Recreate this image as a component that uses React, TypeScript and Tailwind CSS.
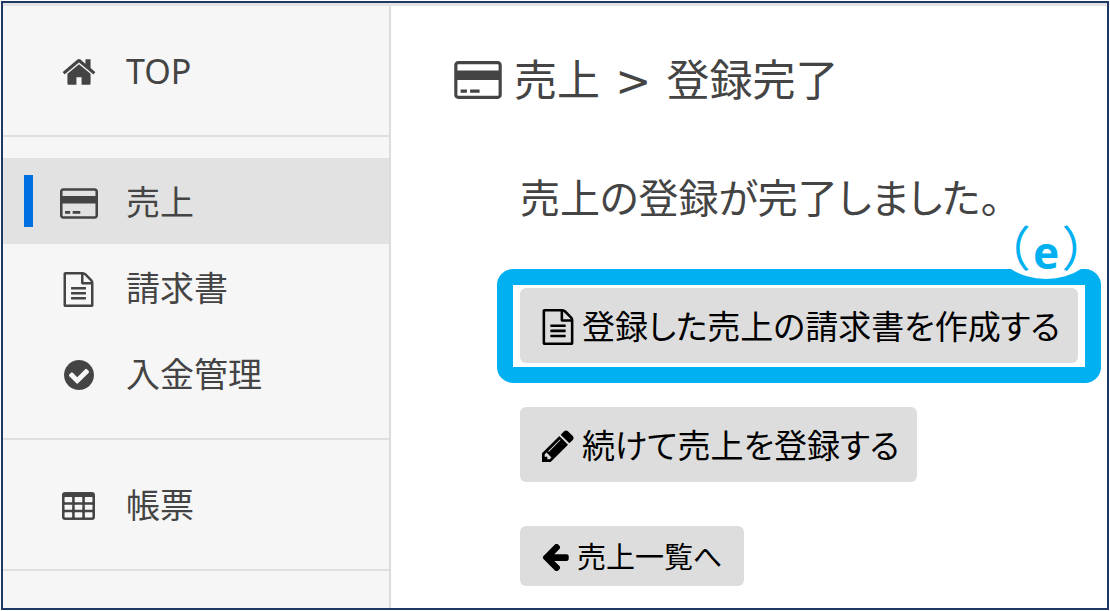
import type { ReactNode } from "react";
import clsx from "clsx";

type IconProps = { className?: string };

function Glyph({ d, viewBox = "0 0 1792 1792", className }: IconProps & { d: string; viewBox?: string }) {
  return (
    <svg viewBox={viewBox} className={clsx("shrink-0", className)} fill="currentColor" aria-hidden="true">
      <path d={d} />
    </svg>
  );
}

function HomeIcon({ className }: IconProps) {
  return (
    <Glyph
      className={className}
      d="M1472 992v480q0 26-19 45t-45 19h-384v-384h-256v384h-384q-26 0-45-19t-19-45v-480q0-1 .5-3t.5-3l575-474 575 474q1 2 1 6zm223-69l-62 74q-8 9-21 11h-3q-13 0-21-7l-692-577-692 577q-12 8-24 7-13-2-21-11l-62-74q-8-10-7-23.5t11-21.5l719-599q32-26 76-26t76 26l244 204v-195q0-14 9-23t23-9h192q14 0 23 9t9 23v408l219 182q10 8 11 21.5t-7 23.5z"
    />
  );
}

function CardIcon({ className }: IconProps) {
  return (
    <Glyph
      className={className}
      viewBox="0 128 1920 1536"
      d="M1760 128q66 0 113 47t47 113v1216q0 66-47 113t-113 47h-1600q-66 0-113-47t-47-113v-1216q0-66 47-113t113-47h1600zm-1600 128q-13 0-22.5 9.5t-9.5 22.5v224h1664v-224q0-13-9.5-22.5t-22.5-9.5h-1600zm1600 1280q13 0 22.5-9.5t9.5-22.5v-608h-1664v608q0 13 9.5 22.5t22.5 9.5h1600zm-1504-128v-128h256v128h-256zm384 0v-128h384v128h-384z"
    />
  );
}

function FileIcon({ className }: IconProps) {
  return (
    <Glyph
      className={className}
      viewBox="128 0 1536 1792"
      d="M1596 380q28 28 48 76t20 88v1152q0 40-28 68t-68 28h-1344q-40 0-68-28t-28-68v-1600q0-40 28-68t68-28h896q40 0 88 20t76 48zm-444-244v376h376q-10-29-22-41l-313-313q-12-12-41-22zm384 1528v-1024h-416q-40 0-68-28t-28-68v-416h-768v1536h1280zm-1024-864q0-14 9-23t23-9h704q14 0 23 9t9 23v64q0 14-9 23t-23 9h-704q-14 0-23-9t-9-23v-64zm736 224q14 0 23 9t9 23v64q0 14-9 23t-23 9h-704q-14 0-23-9t-9-23v-64q0-14 9-23t23-9h704zm0 256q14 0 23 9t9 23v64q0 14-9 23t-23 9h-704q-14 0-23-9t-9-23v-64q0-14 9-23t23-9h704z"
    />
  );
}

function CheckIcon({ className }: IconProps) {
  return (
    <Glyph
      className={className}
      viewBox="128 128 1536 1536"
      d="M1412 734q0-28-18-46l-91-90q-19-19-45-19t-45 19l-408 407-226-226q-19-19-45-19t-45 19l-91 90q-18 18-18 46 0 27 18 45l362 362q19 19 45 19 27 0 46-19l543-543q18-18 18-45zm252 162q0 209-103 385.5t-279.5 279.5-385.5 103-385.5-103-279.5-279.5-103-385.5 103-385.5 279.5-279.5 385.5-103 385.5 103 279.5 279.5 103 385.5z"
    />
  );
}

function TableIcon({ className }: IconProps) {
  const cells = [384, 768, 1152].flatMap((y) => [192, 704, 1216].map((x) => ({ x, y })));
  return (
    <svg viewBox="64 128 1664 1408" className={clsx("shrink-0", className)} aria-hidden="true">
      <mask id="table-cells">
        <rect x="64" y="128" width="1664" height="1408" rx="160" fill="white" />
        {cells.map(({ x, y }) => (
          <rect key={`${x}-${y}`} x={x} y={y} width="384" height="256" rx="32" fill="black" />
        ))}
      </mask>
      <rect x="64" y="128" width="1664" height="1408" fill="currentColor" mask="url(#table-cells)" />
    </svg>
  );
}

function PencilIcon({ className }: IconProps) {
  return (
    <Glyph
      className={className}
      viewBox="128 128 1536 1536"
      d="M491 1536l91-91-235-235-91 91v107h128v128h107zm523-928q0-22-22-22-10 0-17 7l-542 542q-7 7-7 17 0 22 22 22 10 0 17-7l542-542q7-7 7-17zm-54-192l416 416-832 832h-416v-416zm683 96q0 53-37 90l-166 166-416-416 166-165q36-38 90-38 53 0 91 38l235 234q37 39 37 91z"
    />
  );
}

function ArrowLeftIcon({ className }: IconProps) {
  return (
    <Glyph
      className={className}
      viewBox="160 192 1504 1536"
      d="M1664 896v128q0 53-32.5 90.5t-84.5 37.5h-704l293 294q38 36 38 90t-38 90l-75 76q-37 37-90 37-52 0-91-37l-651-652q-37-37-37-90 0-52 37-91l651-650q38-38 91-38 52 0 90 38l75 74q38 38 38 91t-38 91l-293 293h704q52 0 84.5 37.5t32.5 90.5z"
    />
  );
}

type NavItem = { label: string; icon: ReactNode; active?: boolean };

const navGroups: NavItem[][] = [
  [{ label: "TOP", icon: <HomeIcon className="size-9" /> }],
  [
    { label: "売上", icon: <CardIcon className="h-[31px] w-[38px]" />, active: true },
    { label: "請求書", icon: <FileIcon className="h-[35px] w-[31px]" /> },
    { label: "入金管理", icon: <CheckIcon className="size-[30px]" /> },
  ],
  [{ label: "帳票", icon: <TableIcon className="h-[28px] w-[33px]" /> }],
];

function Sidebar() {
  return (
    <nav className="w-[388px] shrink-0 border-r-2 border-[#dcdcdc] bg-[#f6f6f6] text-[#444]">
      {navGroups.map((group) => (
        <ul key={group[0].label} className="border-b-2 border-[#dfdfdf] pt-[21px] pb-[22px]">
          {group.map(({ label, icon, active }) => (
            <li key={label}>
              <a
                href="#"
                aria-current={active ? "page" : undefined}
                className={clsx("flex h-[86px] items-center pt-1 pl-[21px]", active && "bg-[#e2e2e2]")}
              >
                <span className={clsx("mb-1 h-[52px] w-[9px]", active && "bg-[#0070e0]")} />
                <span className="ml-6 flex w-[43px] justify-center">{icon}</span>
                <span className="ml-[26px] pb-0.5 text-[34px] leading-none">{label}</span>
              </a>
            </li>
          ))}
        </ul>
      ))}
    </nav>
  );
}

function ActionButton({ icon, small, children }: { icon: ReactNode; small?: boolean; children: ReactNode }) {
  return (
    <button
      type="button"
      className={clsx(
        "flex items-center gap-2 rounded-md bg-[#dddddd] pt-0.5 pl-[22px] whitespace-nowrap text-black",
        small ? "h-[60px] pr-[22px] text-[29px]" : "h-[75px] pr-[18px] text-[33px]",
      )}
    >
      {icon}
      {children}
    </button>
  );
}

export default function App() {
  return (
    <div className="flex min-h-screen bg-white p-px font-['Noto_Sans','Noto_Sans_CJK_JP',sans-serif]" lang="ja">
      <div className="flex grow border-2 border-[#203864]">
        <div className="flex grow border-t-[3px] border-[#e3e3e3]">
          <Sidebar />
          <main className="grow pt-10 pl-[63px] text-[#444]">
            <h1 className="flex h-[68px] items-center gap-3 text-[43px] leading-none whitespace-nowrap">
              <CardIcon className="h-[38px] w-12" />
              <span>
                売上 <span className="mx-1 font-['DejaVu_Sans',sans-serif]">&gt;</span> 登録完了
              </span>
            </h1>

            <div className="mt-[50px] flex flex-col items-start pl-[66px] [font-feature-settings:'palt']">
              <p className="text-[40px] leading-[68px] whitespace-nowrap">売上の登録が完了しました。</p>

              {/* Highlighted step */}
              <div className="relative mt-[37px] -ml-[23px] rounded-2xl border-16 border-[#00b0f0] px-[7px] pt-[3px] pb-1">
                <span className="absolute -top-[76px] -right-[11px] flex h-[70px] w-[100px] items-center justify-center rounded-[50%] bg-white pt-2 text-[48px] leading-none whitespace-nowrap text-[#00b0f0]">
                  （<b className="mx-1 pt-2 text-[44px]">e</b>）
                </span>
                <ActionButton icon={<FileIcon className="h-[36px] w-[32px]" />}>
                  登録した売上の請求書を作成する
                </ActionButton>
              </div>

              <div className="mt-6">
                <ActionButton icon={<PencilIcon className="size-8" />}>続けて売上を登録する</ActionButton>
              </div>
              <div className="mt-11">
                <ActionButton small icon={<ArrowLeftIcon className="size-[27px]" />}>
                  売上一覧へ
                </ActionButton>
              </div>
            </div>
          </main>
        </div>
      </div>
    </div>
  );
}
